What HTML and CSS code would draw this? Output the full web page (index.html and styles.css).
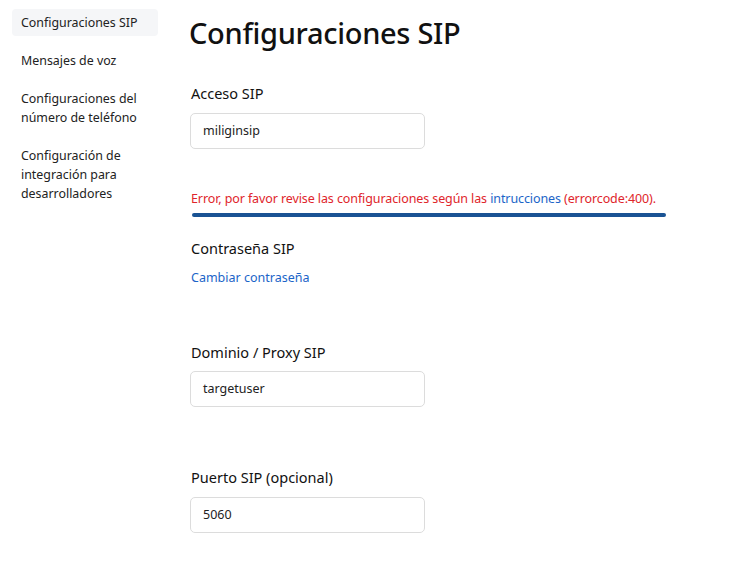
FILE: index.html
```html
<!DOCTYPE html>
<html lang="es">
<head>
<meta charset="utf-8">
<title>Configuraciones SIP</title>
<link rel="stylesheet" href="styles.css">
</head>
<body>
<div class="layout">
  <nav class="sidebar">
    <a class="nav-item active">Configuraciones SIP</a>
    <a class="nav-item">Mensajes de voz</a>
    <a class="nav-item">Configuraciones del<br>número de teléfono</a>
    <a class="nav-item">Configuración de<br>integración para<br>desarrolladores</a>
  </nav>
  <main class="content">
    <h1 class="title">Configuraciones SIP</h1>
    <section class="field first">
      <label class="label">Acceso SIP</label>
      <div class="input">miliginsip</div>
    </section>
    <p class="error">Error, por favor revise las configuraciones según las <a class="link">intrucciones</a> (errorcode:400).</p>
    <div class="bar"></div>
    <section class="field pw">
      <label class="label">Contraseña SIP</label>
      <a class="link change">Cambiar contraseña</a>
    </section>
    <section class="field domain">
      <label class="label">Dominio / Proxy SIP</label>
      <div class="input">targetuser</div>
    </section>
    <section class="field port">
      <label class="label">Puerto SIP (opcional)</label>
      <div class="input">5060</div>
    </section>
  </main>
</div>
</body>
</html>
```

FILE: styles.css
```css
* { box-sizing: border-box; }
html, body { margin: 0; padding: 0; background: #fff; }
body {
  font-family: "Noto Sans", "Open Sans", sans-serif;
  color: #1f1f1f;
}
.layout {
  display: flex;
  align-items: flex-start;
}
.sidebar {
  width: 158px;
  padding: 9px 0 0 12px;
  display: flex;
  flex-direction: column;
  gap: 11px;
  flex-shrink: 0;
}
.nav-item {
  display: block;
  padding: 4px 9px;
  font-size: 12.4px;
  line-height: 19px;
  color: #222;
  border-radius: 4px;
}
.nav-item.active { background: #f5f6f8; }
.content {
  margin-left: 32px;
  display: flex;
  flex-direction: column;
  align-items: flex-start;
}
.title {
  margin: 13px 0 0 -1px;
  font-size: 29px;
  line-height: 40px;
  font-weight: 500;
  color: #111;
  letter-spacing: -0.3px;
}
.field { display: flex; flex-direction: column; align-items: flex-start; }
.field.first { margin-top: 30px; }
.label {
  font-size: 14.5px;
  line-height: 20px;
  font-weight: 400;
  color: #111;
  margin-left: 1px;
}
.input {
  margin-top: 10px;
  width: 235px;
  height: 36px;
  border: 1px solid #dcdcdc;
  border-radius: 5px;
  padding: 0 12px;
  font-size: 12.5px;
  line-height: 34px;
  color: #222;
}
.error {
  margin: 41px 0 0 1px;
  font-size: 12.5px;
  line-height: 18px;
  color: #e0252b;
  letter-spacing: -0.1px;
}
.link { color: #1b64c8; }
.bar {
  margin: 5px 0 0 2px;
  width: 474px;
  height: 4px;
  border-radius: 2px;
  background: #1a5394;
}
.field.pw { margin-top: 21px; }
.change {
  margin: 11px 0 0 1px;
  font-size: 12.5px;
  line-height: 18px;
}
.field.domain { margin-top: 55px; }
.field.domain .input { margin-top: 9px; }
.field.port { margin-top: 60px; }
.field.port .input { margin-top: 10px; }
```
